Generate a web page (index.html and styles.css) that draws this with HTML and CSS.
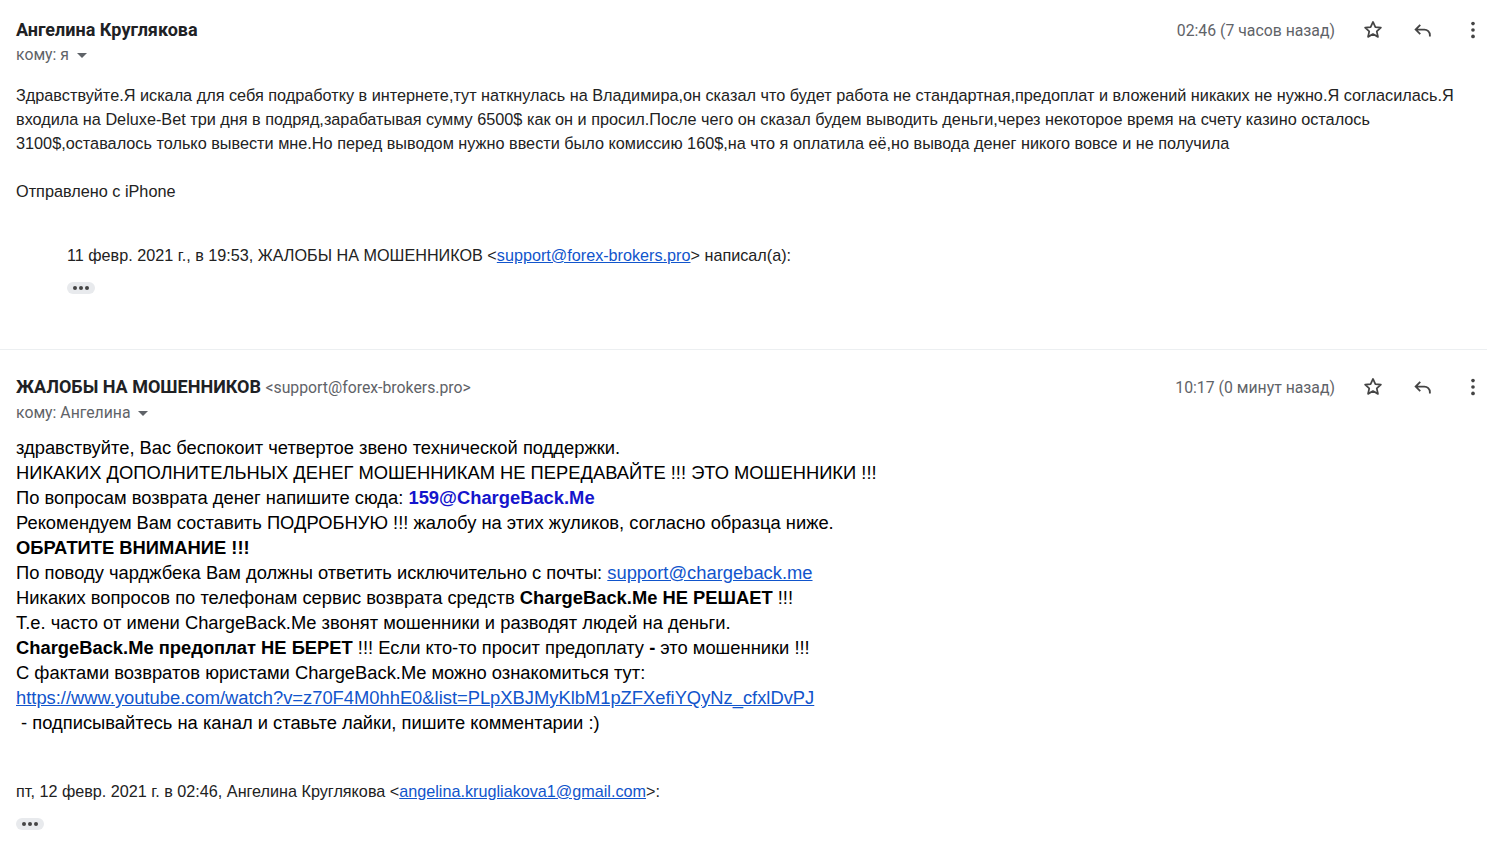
FILE: index.html
```html
<!DOCTYPE html>
<html lang="ru">
<head>
  <meta charset="UTF-8">
  <title>Переписка</title>
  <link rel="stylesheet" href="styles.css">
</head>
<body>
  <div class="thread">

    <!-- first message -->
    <div class="message">
      <div class="msg-head">
        <div class="sender">
          <div class="name">Ангелина Круглякова</div>
          <div class="to">кому: я <span class="caret"></span></div>
        </div>
        <div class="meta">
          <span class="time">02:46 (7 часов назад)</span>
          <svg class="icon" viewBox="0 0 24 24"><path d="M12 3.2l2.6 5.6 6 .6-4.5 4.1 1.3 6-5.4-3.1-5.4 3.1 1.3-6-4.5-4.1 6-.6z" fill="none" stroke="#444" stroke-width="1.9" stroke-linejoin="round"/></svg>
          <svg class="icon" viewBox="0 0 24 24"><path d="M9 6.5L4 11.5l5 5M4 11.5h9.5a6 6 0 0 1 6 6v1.5" fill="none" stroke="#444" stroke-width="2"/></svg>
          <svg class="icon" viewBox="0 0 24 24"><circle cx="12" cy="5" r="2"/><circle cx="12" cy="12" r="2"/><circle cx="12" cy="19" r="2"/></svg>
        </div>
      </div>
      <div class="body-a">
        <p>Здравствуйте.Я искала для себя подработку в интернете,тут наткнулась на Владимира,он сказал что будет работа не стандартная,предоплат и вложений никаких не нужно.Я согласилась.Я входила на Deluxe-Bet три дня в подряд,зарабатывая сумму 6500$ как он и просил.После чего он сказал будем выводить деньги,через некоторое время на счету казино осталось 3100$,оставалось только вывести мне.Но перед выводом нужно ввести было комиссию 160$,на что я оплатила её,но вывода денег никого вовсе и не получила</p>
        <p>Отправлено с iPhone</p>
      </div>
      <div class="quote quote-indent">
        <p>11 февр. 2021 г., в 19:53, ЖАЛОБЫ НА МОШЕННИКОВ &lt;<a href="#">support@forex-brokers.pro</a>&gt; написал(а):</p>
        <div class="dots"><i></i><i></i><i></i></div>
      </div>
    </div>

    <!-- second message -->
    <div class="message second">
      <div class="msg-head">
        <div class="sender">
          <div class="name">ЖАЛОБЫ НА МОШЕННИКОВ <span class="addr">&lt;support@forex-brokers.pro&gt;</span></div>
          <div class="to">кому: Ангелина <span class="caret"></span></div>
        </div>
        <div class="meta">
          <span class="time">10:17 (0 минут назад)</span>
          <svg class="icon" viewBox="0 0 24 24"><path d="M12 3.2l2.6 5.6 6 .6-4.5 4.1 1.3 6-5.4-3.1-5.4 3.1 1.3-6-4.5-4.1 6-.6z" fill="none" stroke="#444" stroke-width="1.9" stroke-linejoin="round"/></svg>
          <svg class="icon" viewBox="0 0 24 24"><path d="M9 6.5L4 11.5l5 5M4 11.5h9.5a6 6 0 0 1 6 6v1.5" fill="none" stroke="#444" stroke-width="2"/></svg>
          <svg class="icon" viewBox="0 0 24 24"><circle cx="12" cy="5" r="2"/><circle cx="12" cy="12" r="2"/><circle cx="12" cy="19" r="2"/></svg>
        </div>
      </div>
      <div class="body-b">
        <div>здравствуйте, Вас беспокоит четвертое звено технической поддержки.</div>
        <div>НИКАКИХ ДОПОЛНИТЕЛЬНЫХ ДЕНЕГ МОШЕННИКАМ НЕ ПЕРЕДАВАЙТЕ !!! ЭТО МОШЕННИКИ !!!</div>
        <div>По вопросам возврата денег напишите сюда: <b class="blue">159@ChargeBack.Me</b></div>
        <div>Рекомендуем Вам составить ПОДРОБНУЮ !!! жалобу на этих жуликов, согласно образца ниже.</div>
        <div><b>ОБРАТИТЕ ВНИМАНИЕ !!!</b></div>
        <div>По поводу чарджбека Вам должны ответить исключительно с почты: <a href="#">support@chargeback.me</a></div>
        <div>Никаких вопросов по телефонам сервис возврата средств <b>ChargeBack.Me НЕ РЕШАЕТ</b> !!!</div>
        <div>Т.е. часто от имени ChargeBack.Me звонят мошенники и разводят людей на деньги.</div>
        <div><b>ChargeBack.Me предоплат НЕ БЕРЕТ</b> !!! Если кто-то просит предоплату <b>-</b> это мошенники !!!</div>
        <div>С фактами возвратов юристами ChargeBack.Me можно ознакомиться тут:</div>
        <div><a href="#">https://www.youtube.com/watch?v=z70F4M0hhE0&amp;list=PLpXBJMyKlbM1pZFXefiYQyNz_cfxlDvPJ</a></div>
        <div>&nbsp;- подписывайтесь на канал и ставьте лайки, пишите комментарии :)</div>
      </div>
      <div class="quote">
        <p>пт, 12 февр. 2021 г. в 02:46, Ангелина Круглякова &lt;<a href="#">angelina.krugliakova1@gmail.com</a>&gt;:</p>
        <div class="dots"><i></i><i></i><i></i></div>
      </div>
    </div>

  </div>
</body>
</html>
```

FILE: styles.css
```css
body {
  margin: 0;
  background: #fff;
  font-family: Roboto, "Liberation Sans", sans-serif;
  color: #222;
}

.thread {
  width: 1487px;
}

.message {
  padding: 18px 3px 0 16px;
}

.message.second {
  border-top: 1px solid #eceff1;
  padding-top: 25px;
}

.msg-head {
  display: flex;
  justify-content: space-between;
  align-items: flex-start;
}

.name {
  font-size: 18px;
  font-weight: bold;
  color: #202124;
  line-height: 24px;
}

.addr {
  font-size: 15.8px;
  font-weight: normal;
  color: #5f6368;
}

.to {
  font-size: 15.8px;
  color: #5f6368;
  line-height: 20px;
  margin-top: 3px;
}

.caret {
  display: inline-block;
  width: 0;
  height: 0;
  border-left: 5px solid transparent;
  border-right: 5px solid transparent;
  border-top: 5px solid #5f6368;
  margin-left: 4px;
  vertical-align: middle;
}

.meta {
  display: flex;
  align-items: center;
  height: 24px;
}

.time {
  font-size: 15.8px;
  color: #5f6368;
  margin-right: 27px;
}

.icon {
  width: 22px;
  height: 22px;
  fill: #444;
  margin-left: 28px;
}

.meta .time + .icon {
  margin-left: 0;
}

.body-a {
  font-family: "Liberation Sans", Arial, sans-serif;
  font-size: 16.25px;
  line-height: 24px;
  color: #222;
  margin-top: 18px;
}

.body-a p {
  margin: 0 0 24px;
}

.quote {
  font-family: "Liberation Sans", Arial, sans-serif;
  font-size: 16.2px;
  color: #222;
}

.quote-indent {
  margin-left: 51px;
  margin-top: 40px;
  padding-bottom: 55px;
}

.quote p {
  margin: 0;
  line-height: 24px;
}

.quote a, .body-b a {
  color: #1155cc;
}

.dots {
  display: flex;
  justify-content: center;
  align-items: center;
  gap: 2px;
  width: 28px;
  height: 12px;
  margin-top: 15px;
  background: #e8eaed;
  border-radius: 6px;
}

.dots i {
  width: 4px;
  height: 4px;
  border-radius: 50%;
  background: #444;
}

.body-b {
  font-family: "Liberation Sans", Arial, sans-serif;
  font-size: 18.35px;
  line-height: 25px;
  color: #000;
  margin-top: 12px;
}

.body-b .blue {
  color: #1515cc;
}

.body-b + .quote {
  margin-top: 44px;
}
```
